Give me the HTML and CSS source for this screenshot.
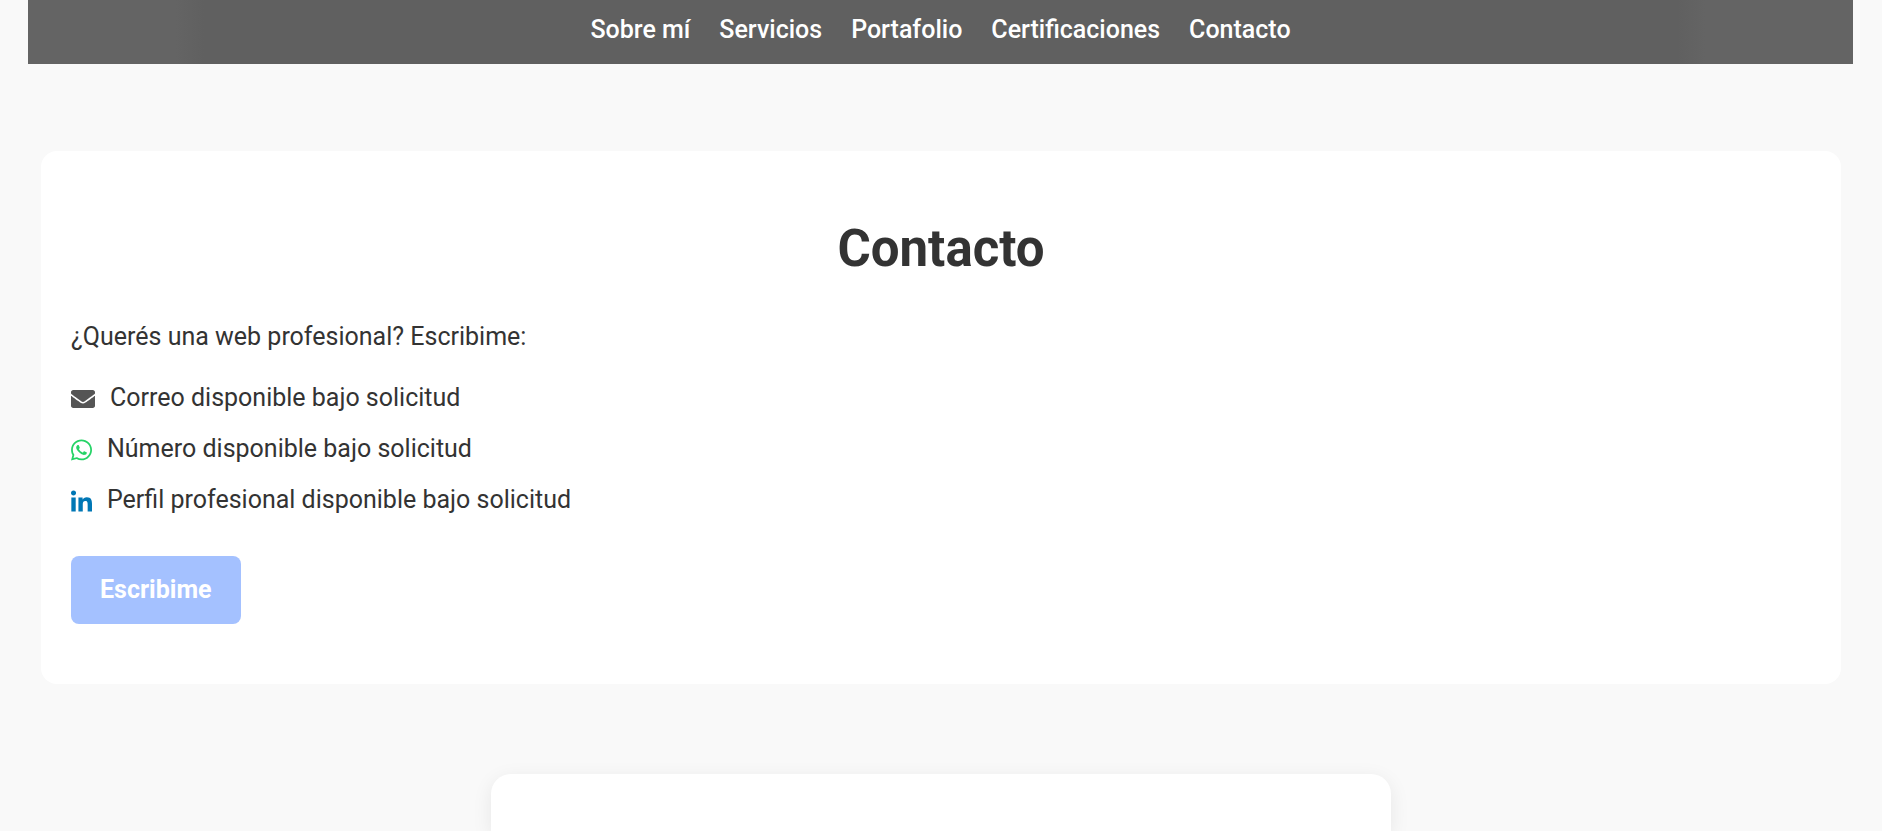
FILE: index.html
```html
<!DOCTYPE html>
<html lang="es">
<head>
<meta charset="utf-8">
<meta name="viewport" content="width=device-width, initial-scale=1">
<title>Contacto</title>
<link rel="stylesheet" href="styles.css">
</head>
<body>
<header class="topbar">
  <nav class="topnav" aria-label="Principal">
    <a href="#sobre-mi">Sobre mí</a>
    <a href="#servicios">Servicios</a>
    <a href="#portafolio">Portafolio</a>
    <a href="#certificaciones">Certificaciones</a>
    <a href="#contacto">Contacto</a>
  </nav>
</header>
<main class="page">
  <section class="contact" id="contacto">
    <h2 class="contact-title">Contacto</h2>
    <p class="contact-lead">¿Querés una web profesional? Escribime:</p>
    <ul class="contact-list">
      <li>
        <svg class="icon icon-mail" viewBox="0 0 512 512" aria-hidden="true"><path d="M502.3 190.8c3.900-3.100 9.700-.2 9.700 4.700V400c0 26.500-21.500 48-48 48H48c-26.500 0-48-21.500-48-48V195.600c0-5 5.700-7.800 9.700-4.700 22.400 17.400 52.100 39.500 154.100 113.600 21.100 15.400 56.700 47.800 92.200 47.600 35.700.3 72-32.800 92.300-47.600 102-74.100 131.600-96.300 154-113.700zM256 320c23.200.4 56.600-29.200 73.400-41.400 132.700-96.300 142.800-104.700 173.400-128.700 5.800-4.500 9.200-11.500 9.200-18.900v-19c0-26.500-21.500-48-48-48H48c-26.500 0-48 21.500-48 48v19c0 7.400 3.400 14.300 9.200 18.900 30.600 23.900 40.700 32.400 173.400 128.700 16.800 12.200 50.200 41.800 73.400 41.400z"/></svg>
        <span>Correo disponible bajo solicitud</span>
      </li>
      <li>
        <svg class="icon icon-whatsapp" viewBox="0 0 448 512" aria-hidden="true"><path d="M380.9 97.1C339 55.100 283.200 32 223.900 32c-122.400 0-222 99.600-222 222 0 39.100 10.200 77.300 29.600 111L0 480l117.700-30.900c32.400 17.700 68.900 27 106.100 27h.1c122.300 0 224.100-99.600 224.100-222 0-59.300-25.200-115-67.100-157zm-157 341.600c-33.200 0-65.700-8.900-94-25.700l-6.700-4-69.800 18.300L72 359.200l-4.400-7c-18.500-29.400-28.200-63.300-28.200-98.200 0-101.700 82.800-184.500 184.600-184.500 49.300 0 95.600 19.200 130.400 54.100 34.800 34.900 56.200 81.200 56.100 130.500 0 101.800-84.900 184.600-186.600 184.600zm101.200-138.200c-5.500-2.800-32.800-16.200-37.900-18-5.100-1.900-8.800-2.800-12.500 2.800-3.700 5.600-14.300 18-17.600 21.800-3.200 3.700-6.500 4.200-12 1.400-32.600-16.300-54-29.100-75.500-66-5.700-9.800 5.700-9.100 16.300-30.300 1.800-3.700.9-6.900-.5-9.700-1.400-2.800-12.500-30.100-17.100-41.200-4.500-10.800-9.100-9.300-12.500-9.500-3.200-.2-6.900-.2-10.600-.2-3.700 0-9.700 1.400-14.800 6.900-5.100 5.600-19.400 19-19.400 46.300 0 27.300 19.900 53.700 22.600 57.400 2.800 3.700 39.100 59.700 94.800 83.800 35.200 15.200 49 16.500 66.600 13.900 10.700-1.600 32.800-13.400 37.400-26.400 4.600-13 4.600-24.100 3.200-26.400-1.300-2.500-5-3.900-10.500-6.600z"/></svg>
        <span>Número disponible bajo solicitud</span>
      </li>
      <li>
        <svg class="icon icon-linkedin" viewBox="0 0 448 512" aria-hidden="true"><path d="M100.280 480H7.400V180.900h92.880zM53.790 140.100C24.090 140.100 0 115.500 0 85.800a53.790 53.790 0 0 1 107.580 0c0 29.700-24.100 54.300-53.790 54.300zM447.900 480h-92.680V334.400c0-34.700-.7-79.200-48.290-79.200-48.290 0-55.690 37.700-55.690 76.700V480h-92.780V180.900h89.080v40.800h1.300c12.400-23.500 42.690-48.300 87.880-48.300 94 0 111.280 61.900 111.280 142.300V480z"/></svg>
        <span>Perfil profesional disponible bajo solicitud</span>
      </li>
    </ul>
    <button class="contact-button" type="button">Escribime</button>
  </section>
  <section class="panel"></section>
</main>
</body>
</html>
```
FILE: styles.css
```css
* {
  box-sizing: border-box;
}

body {
  margin: 0;
  background: #f9f9f9;
  color: #333;
  font-family: Roboto, "Open Sans", sans-serif;
  font-size: 25px;
  line-height: 36px;
}

.topbar {
  margin: 0 29px 0 28px;
  padding: 12px 24px 16px;
  background: linear-gradient(90deg, transparent 148px, #606060 176px, #606060 calc(100% - 176px), transparent calc(100% - 148px)) #646464;
}

.topnav {
  display: flex;
  flex-wrap: wrap;
  justify-content: center;
  gap: 0 29px;
}

.topnav a {
  color: #fff;
  font-weight: 500;
  text-decoration: none;
}

.page {
  display: flex;
  flex-direction: column;
  align-items: center;
  gap: 90px;
  padding: 87px 41px 0;
}

.contact {
  width: 100%;
  max-width: 1800px;
  padding: 64px 30px 60px;
  border-radius: 16px;
  background: #fff;
}

.contact-title {
  margin: 0 0 36px;
  font-size: 51px;
  font-weight: 700;
  line-height: 68px;
  text-align: center;
}

.contact-lead {
  margin: 0 0 25px;
}

.contact-list {
  display: grid;
  gap: 15px;
  margin: 0 0 38px;
  padding: 0;
  list-style: none;
}

.contact-list li {
  display: flex;
  align-items: center;
  gap: 15px;
}

.icon {
  height: 24px;
  margin-top: 2px;
  fill: currentColor;
}

.icon-mail {
  width: 24px;
  color: #555;
}

.icon-whatsapp {
  width: 21px;
  color: #25d366;
}

.icon-linkedin {
  width: 21px;
  color: #0077b5;
}

.contact-button {
  display: block;
  padding: 16px 29px;
  border: 0;
  border-radius: 8px;
  background: #a4c1ff;
  color: #fff;
  font: inherit;
  font-weight: 700;
}

.panel {
  width: 100%;
  max-width: 900px;
  min-height: 57px;
  border-radius: 20px 20px 0 0;
  background: #fff;
  box-shadow: 0 5px 20px rgba(0, 0, 0, 0.08);
  clip-path: inset(-30px -40px 0);
}
```
